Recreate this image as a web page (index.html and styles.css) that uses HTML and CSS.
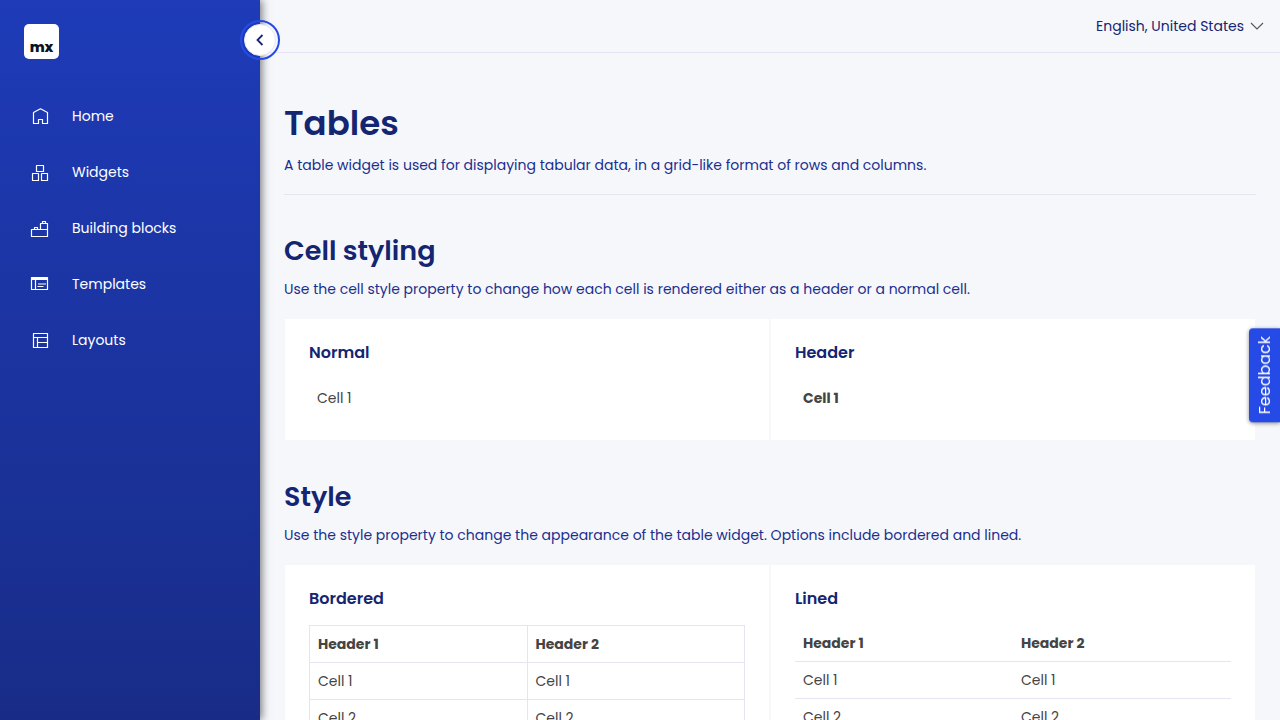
FILE: index.html
```html
<!DOCTYPE html>
<html lang="en">
<head>
<meta charset="utf-8">
<meta name="viewport" content="width=device-width, initial-scale=1">
<title>Tables</title>
<link rel="stylesheet" href="styles.css">
</head>
<body>
<div class="shell">
  <aside class="sidebar">
    <div class="logo">mx</div>
    <nav class="nav" aria-label="Main">
      <a class="nav-link" href="#"><svg class="icon" viewBox="0 0 24 24"><path d="M12.5 4.8l7 3.7v11h-5v-4h-4v4h-5v-11z"/></svg>Home</a>
      <a class="nav-link" href="#"><svg class="icon" viewBox="0 0 24 24"><path d="M8.5 5.5h7v6h-7zM4.5 13.5h6v7h-6zM13.5 13.5h6v7h-6z"/></svg>Widgets</a>
      <a class="nav-link" href="#"><svg class="icon" viewBox="0 0 24 24"><path d="M3.5 13.5h16v7h-16zM12.5 13.5v-6h7v6M14.5 7.5v-2h3v2M6.5 13.5v-2h3v2"/></svg>Building blocks</a>
      <a class="nav-link" href="#"><svg class="icon" viewBox="0 0 24 24"><path d="M3.5 5.5h16v12h-16zM3.5 6.5h16M3.5 7.5h16M7.5 8v9.500M10 12h8M9.500 14.500h6"/></svg>Templates</a>
      <a class="nav-link" href="#"><svg class="icon" viewBox="0 0 24 24"><path d="M5.500 5.500h14v14h-14zM5.500 9.500h14M9.500 9.500v10M9.500 14.500h10"/></svg>Layouts</a>
    </nav>
    <button class="toggle" type="button" aria-label="Collapse menu">
      <span class="toggle-face"><svg class="toggle-icon" viewBox="0 0 16 16"><path d="M10.500 3L5.500 8l5 5"/></svg></span>
    </button>
  </aside>
  <div class="page">
    <header class="topbar">
      <button class="language" type="button">English, United States
        <svg class="chevron" viewBox="0 0 14 8"><path d="M1 1l6 6 6-6"/></svg>
      </button>
    </header>
    <main class="content">
      <div class="intro">
        <h1 class="title">Tables</h1>
        <p class="text">A table widget is used for displaying tabular data, in a grid-like format of rows and columns.</p>
      </div>
      <section class="section">
        <h2 class="heading">Cell styling</h2>
        <p class="text">Use the cell style property to change how each cell is rendered either as a header or a normal cell.</p>
        <div class="cards">
          <div class="card">
            <h3 class="card-title">Normal</h3>
            <table class="table"><tbody><tr><td>Cell 1</td></tr></tbody></table>
          </div>
          <div class="card">
            <h3 class="card-title">Header</h3>
            <table class="table"><tbody><tr><th>Cell 1</th></tr></tbody></table>
          </div>
        </div>
      </section>
      <section class="section">
        <h2 class="heading">Style</h2>
        <p class="text">Use the style property to change the appearance of the table widget. Options include bordered and lined.</p>
        <div class="cards">
          <div class="card">
            <h3 class="card-title">Bordered</h3>
            <table class="table table-bordered">
              <thead><tr><th>Header 1</th><th>Header 2</th></tr></thead>
              <tbody><tr><td>Cell 1</td><td>Cell 1</td></tr><tr><td>Cell 2</td><td>Cell 2</td></tr></tbody>
            </table>
          </div>
          <div class="card">
            <h3 class="card-title">Lined</h3>
            <table class="table table-lined">
              <thead><tr><th>Header 1</th><th>Header 2</th></tr></thead>
              <tbody><tr><td>Cell 1</td><td>Cell 1</td></tr><tr><td>Cell 2</td><td>Cell 2</td></tr></tbody>
            </table>
          </div>
        </div>
      </section>
    </main>
  </div>
</div>
<button class="feedback" type="button">Feedback</button>
</body>
</html>
```
FILE: styles.css
```css
* { box-sizing: border-box; }
body {
  margin: 0;
  background: #f6f7fb;
  color: #142571;
  font: 14px/20px Poppins, Inter, sans-serif;
}
button { font: inherit; color: inherit; cursor: pointer; }
h1, h2, h3, p { margin: 0; }

.shell { display: flex; height: 100vh; overflow: hidden; }

.sidebar {
  position: relative;
  z-index: 1;
  flex: 0 0 260px;
  padding-top: 24px;
  background: linear-gradient(#1e3bb8, #182c87);
  box-shadow: 2px 0 8px rgba(0, 0, 0, 0.5);
}
.logo {
  display: flex;
  align-items: flex-end;
  justify-content: center;
  width: 35px;
  height: 35px;
  margin-left: 24px;
  padding-bottom: 2px;
  border-radius: 5px;
  background: #fff;
  color: #0a1325;
  font-size: 14px;
  font-weight: 800;
}
.nav { display: flex; flex-direction: column; margin-top: 29px; }
.nav-link {
  display: flex;
  align-items: center;
  gap: 20px;
  height: 56px;
  padding-left: 28px;
  color: #fff;
  text-decoration: none;
}
.icon { width: 24px; height: 24px; fill: none; stroke: #fff; stroke-width: 1.2; stroke-linejoin: round; }

.toggle {
  position: absolute;
  top: 20px;
  right: -20px;
  display: grid;
  place-items: center;
  width: 40px;
  height: 40px;
  padding: 0;
  border: 2px solid #264ae5;
  border-radius: 50%;
  background: none;
}
.toggle-face {
  display: grid;
  place-items: center;
  width: 32px;
  height: 32px;
  border: 1px solid #e7e7f3;
  border-radius: 50%;
  background: #fff;
}
.toggle-icon { width: 16px; height: 16px; fill: none; stroke: #142571; stroke-width: 1.8; }

.page { flex: 1; min-width: 0; overflow: hidden; }
.topbar {
  display: flex;
  justify-content: flex-end;
  align-items: center;
  height: 53px;
  padding: 0 16px;
  border-bottom: 1px solid #e4e4f3;
}
.language {
  display: flex;
  align-items: center;
  gap: 6px;
  padding: 0;
  border: 0;
  background: none;
}
.chevron { width: 14px; height: 8px; fill: none; stroke: #555; stroke-width: 1.1; }

.content { padding: 48px 24px; }
.intro { padding-bottom: 19px; border-bottom: 1px solid #e4e4f3; }
.title { margin-bottom: 10px; font-size: 34px; line-height: 44px; font-weight: 600; }
.section { margin-top: 40px; }
.heading { margin-bottom: 12px; font-size: 27px; line-height: 32px; font-weight: 600; }
.text { color: #1b2f8f; font-size: 14px; }

.cards { display: grid; grid-template-columns: 1fr 1fr; gap: 2px; margin-top: 20px; padding: 0 1px 1px; }
.card { padding: 24px; background: #fff; }
.card-title { margin-bottom: 16px; font-size: 16px; font-weight: 600; }

.table { width: 100%; border-collapse: collapse; table-layout: fixed; color: #444; }
.table th, .table td { height: 37px; padding: 8px; text-align: left; }
.table th { font-weight: 700; }
.table-bordered th, .table-bordered td { border: 1px solid #e4e4f3; }
.table-lined { border-collapse: separate; border-spacing: 0; }
.table-lined th, .table-lined td { border-bottom: 1px solid #e4e4f3; }

.feedback {
  position: fixed;
  z-index: 2;
  top: 328px;
  right: 0;
  padding: 8px 5px;
  border: 0;
  border-radius: 0 4px 4px 0;
  background: #264ae5;
  color: #fff;
  font-size: 16px;
  line-height: 21px;
  writing-mode: vertical-rl;
  transform: rotate(180deg);
  box-shadow: 0 -1px 4px rgba(0, 0, 0, 0.45);
}
```
